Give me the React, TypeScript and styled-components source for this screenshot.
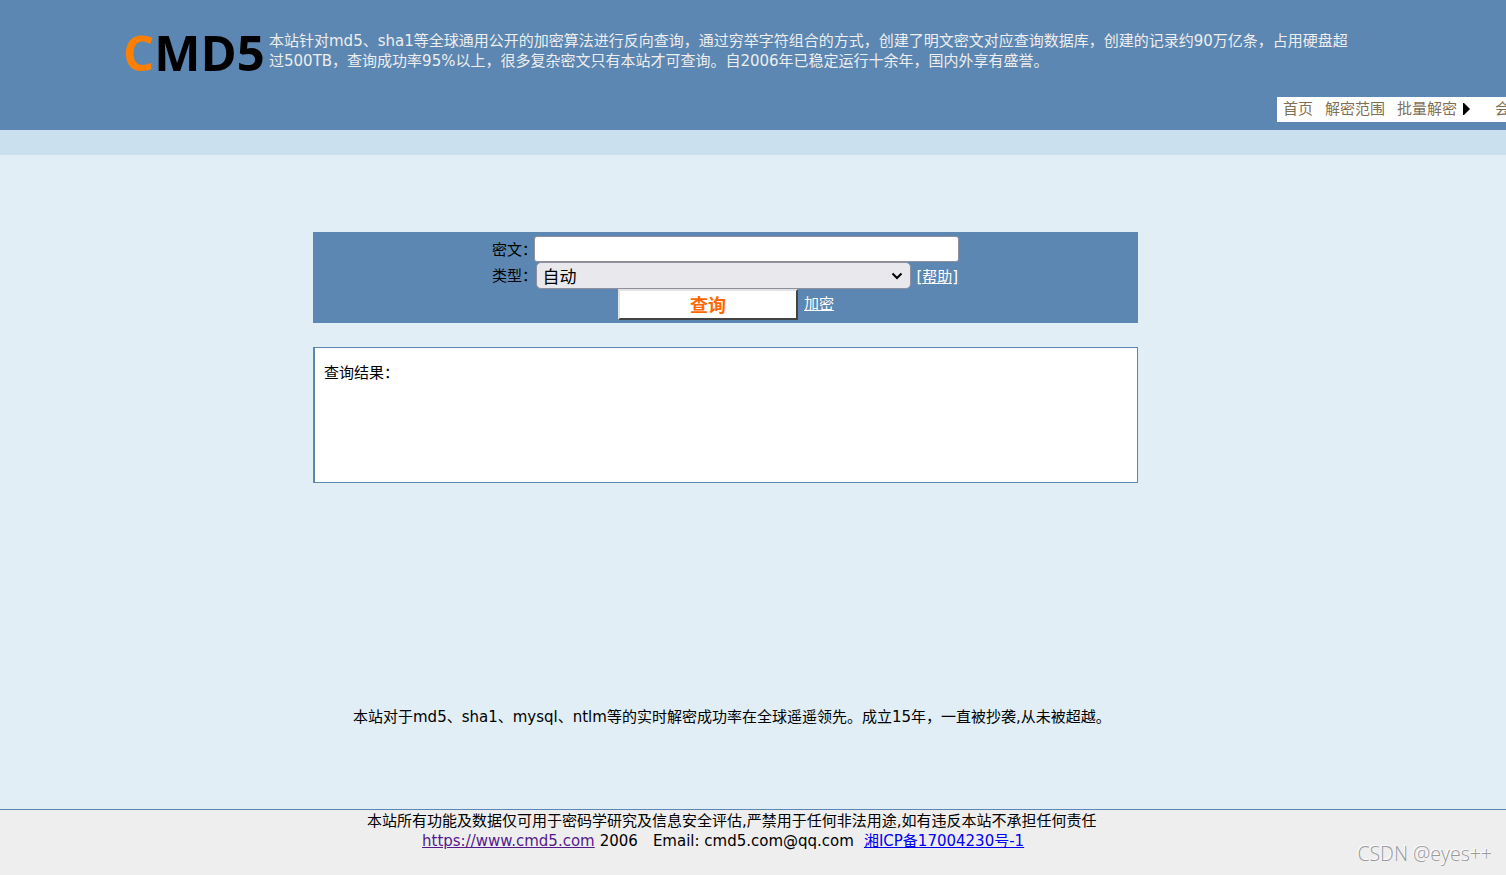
import React from "react";
import styled, { createGlobalStyle } from "styled-components";

const blue = "#5c87b2";

const GlobalStyle = createGlobalStyle`
  body {
    margin: 0;
    background: #e1eef6;
    overflow: hidden;
    color: #000;
    font: 15px/20px "DejaVu Sans", "Noto Sans CJK SC", sans-serif;
  }
`;

const Page = styled.div`
  display: flex;
  flex-direction: column;
  width: 1506px;
  height: 875px;
  overflow: hidden;
`;

const Header = styled.header`
  flex: none;
  height: 130px;
  box-sizing: border-box;
  padding-top: 31px;
  background: ${blue};
  display: flex;
  flex-direction: column;
`;

const Brand = styled.div`
  display: flex;
  height: 66px;
  padding-left: 123px;
`;

const Logo = styled.h1`
  margin: 0;
  width: 146px;
  flex: none;
  font: bold 49px/43px "Open Sans", "Noto Sans", sans-serif;
  color: #000;
  white-space: nowrap;
`;

const LogoAccent = styled.span`
  color: #ff8000;
`;

const Intro = styled.p`
  margin: 0;
  color: #eee;
  white-space: nowrap;
`;

const Nav = styled.nav`
  flex: none;
  display: flex;
  margin-left: 1277px;
  height: 25px;
  background: #fff;
  overflow: hidden;
`;

const NavItem = styled.a`
  flex: none;
  display: flex;
  align-items: center;
  padding: 0 6px;
  line-height: 25px;
  color: #7f6f55;
  white-space: nowrap;
`;

const Arrow = styled.svg`
  width: 8px;
  height: 12px;
  margin: 0 12px 2px 6px;
`;

const Band = styled.div`
  flex: none;
  height: 25px;
  background: #cae0ee;
`;

const Main = styled.main`
  flex: 1;
  display: flex;
  flex-direction: column;
  padding: 77px 0 0 313px;
`;

const Form = styled.form`
  width: 825px;
  height: 91px;
  box-sizing: border-box;
  padding: 4px 0 0 179px;
  background: ${blue};
`;

const Row = styled.div<{ $indent?: number; $height: number }>`
  display: flex;
  align-items: flex-start;
  height: ${(p) => p.$height}px;
  padding-left: ${(p) => p.$indent ?? 0}px;
  white-space: nowrap;
`;

const Label = styled.label<{ $width: number }>`
  width: ${(p) => p.$width}px;
  flex: none;
  padding-top: 4px;
`;

const Field = styled.input`
  width: 425px;
  height: 26px;
  box-sizing: border-box;
  border: 1px solid #8f8f9d;
  border-radius: 3px;
  background: #fff;
  outline: none;
`;

const Select = styled.button`
  display: flex;
  align-items: center;
  justify-content: space-between;
  width: 375px;
  height: 27px;
  box-sizing: border-box;
  padding: 0 7px 0 6px;
  border: 1px solid #8f8f9d;
  border-radius: 5px;
  background: #e9e9ed;
  color: #000;
  font: 17px/24px "Noto Sans CJK SC", sans-serif;
`;

const Submit = styled.button`
  width: 180px;
  height: 31px;
  box-sizing: border-box;
  padding: 0;
  border: 2px outset #e3e3e3;
  border-color: #e3e3e3 #979797 #979797 #e3e3e3;
  background: #fff;
  color: #ff6600;
  font: bold 18px/25px "Noto Sans CJK SC", sans-serif;
`;

const FormLink = styled.a`
  margin-left: 6px;
  padding-top: 5px;
  color: #fff;
  text-decoration: underline;
`;

const Result = styled.section`
  width: 825px;
  height: 136px;
  box-sizing: border-box;
  margin-top: 24px;
  padding: 15px 9px;
  border: 1px solid ${blue};
  border-left-width: 2px;
  background: #fff;
`;

const Slogan = styled.p`
  margin: 224px 0 0 40px;
  white-space: nowrap;
`;

const Footer = styled.footer`
  position: relative;
  flex: none;
  height: 66px;
  box-sizing: border-box;
  border-top: 1px solid ${blue};
  background: #eee;
  padding-top: 1px;
  white-space: nowrap;
`;

const FooterLine = styled.div<{ $left: number }>`
  display: flex;
  height: 20px;
  padding-left: ${(p) => p.$left}px;
`;

const FooterLink = styled.a<{ $visited?: boolean }>`
  color: ${(p) => (p.$visited ? "#551a8b" : "#0000ee")};
  text-decoration: underline;
`;

const FooterText = styled.span<{ $before: number; $after: number }>`
  margin: 0 ${(p) => p.$after}px 0 ${(p) => p.$before}px;
`;

const Watermark = styled.span`
  position: absolute;
  right: 14px;
  bottom: 8px;
  color: #999;
  font: 300 19.5px/26px "Open Sans", "Noto Sans", sans-serif;
  text-shadow: -1px -1px 0 #fff;
`;

export default function App() {
  return (
    <Page>
      <GlobalStyle />
      <Header>
        <Brand>
          <Logo>
            <LogoAccent>C</LogoAccent>MD5
          </Logo>
          <Intro>
            本站针对md5、sha1等全球通用公开的加密算法进行反向查询，通过穷举字符组合的方式，创建了明文密文对应查询数据库，创建的记录约90万亿条，占用硬盘超
            <br />
            过500TB，查询成功率95%以上，很多复杂密文只有本站才可查询。自2006年已稳定运行十余年，国内外享有盛誉。
          </Intro>
        </Brand>
        <Nav>
          <NavItem>首页</NavItem>
          <NavItem>解密范围</NavItem>
          <NavItem>
            批量解密
            <Arrow viewBox="0 0 8 12">
              <path d="M0 0h1l6 6-6 6H0z" fill="#000" />
            </Arrow>
          </NavItem>
          <NavItem>会员</NavItem>
        </Nav>
      </Header>
      <Band />
      <Main>
        <Form onSubmit={(e) => e.preventDefault()}>
          <Row $height={26}>
            <Label $width={42} htmlFor="hash">密文：</Label>
            <Field id="hash" />
          </Row>
          <Row $height={27}>
            <Label $width={43.5}>类型：</Label>
            <Select type="button">
              自动
              <svg width="12" height="8" viewBox="0 0 12 8" fill="none">
                <path d="M1.5 1.5 6 6l4.5-4.5" stroke="#000" strokeWidth="2" />
              </svg>
            </Select>
            <FormLink>[帮助]</FormLink>
          </Row>
          <Row $height={31} $indent={126}>
            <Submit type="submit">查询</Submit>
            <FormLink>加密</FormLink>
          </Row>
        </Form>
        <Result>查询结果：</Result>
        <Slogan>
          本站对于md5、sha1、mysql、ntlm等的实时解密成功率在全球遥遥领先。成立15年，一直被抄袭,从未被超越。
        </Slogan>
      </Main>
      <Footer>
        <FooterLine $left={367}>
          本站所有功能及数据仅可用于密码学研究及信息安全评估,严禁用于任何非法用途,如有违反本站不承担任何责任
        </FooterLine>
        <FooterLine $left={422}>
          <FooterLink $visited>https://www.cmd5.com</FooterLink>
          <FooterText $before={5} $after={15}>2006</FooterText>
          <span>Email: cmd5.com@qq.com</span>
          <FooterText $before={10} $after={0}>
            <FooterLink>湘ICP备17004230号-1</FooterLink>
          </FooterText>
        </FooterLine>
        <Watermark>CSDN @eyes++</Watermark>
      </Footer>
    </Page>
  );
}
